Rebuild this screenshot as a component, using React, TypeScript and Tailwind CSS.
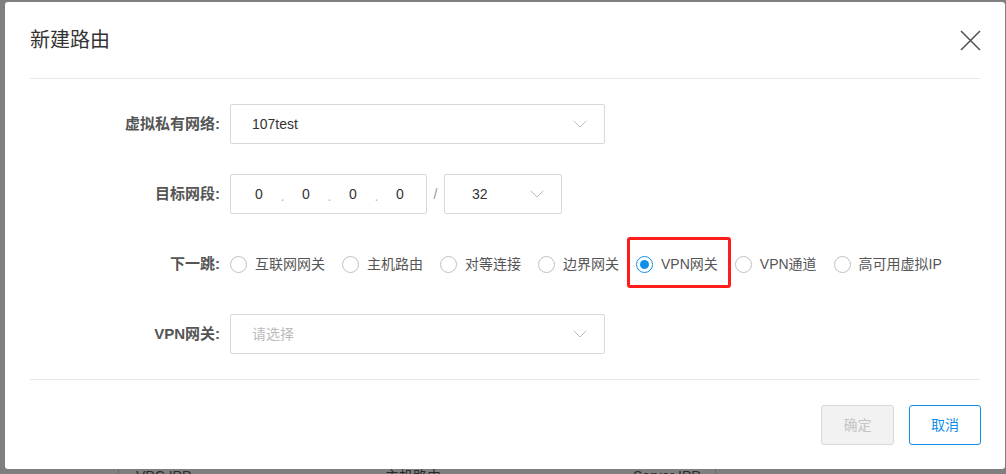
import { ChevronDown } from 'lucide-react';

const font = { fontFamily: '"Liberation Sans", "Noto Sans CJK SC", sans-serif' };

const hops = ['互联网网关', '主机路由', '对等连接', '边界网关', 'VPN网关', 'VPN通道', '高可用虚拟IP'];

function Label({ children }: { children: React.ReactNode }) {
  return (
    <div className="w-[200px] shrink-0 pr-[10px] text-right text-[15px] font-bold text-[#555]">
      {children}
    </div>
  );
}

function Radio({ checked }: { checked?: boolean }) {
  return (
    <span
      className={
        checked
          ? 'w-[17px] h-[17px] rounded-full border border-[#108ee9] flex items-center justify-center shrink-0'
          : 'w-[17px] h-[17px] rounded-full border border-[#bfbfbf] shrink-0'
      }
    >
      {checked && <span className="w-[9px] h-[9px] rounded-full bg-[#108ee9]" />}
    </span>
  );
}

export default function App() {
  return (
    <div className="relative h-[474px] w-full overflow-hidden bg-[#7f7f7f]" style={font}>
      {/* page behind the overlay */}
      <div className="flex pt-[466px] text-[14px] leading-[20px] text-[#2a2a2a]">
        <div className="w-[118px]" />
        <div className="w-[267px] border-l border-[#6a6a6a] pl-[17px]">VPC IPP</div>
        <div className="w-[248px]">主机路由</div>
        <div className="w-[82px]">Server IPP</div>
        <div className="border-l border-[#6a6a6a] pl-[2px]"></div>
      </div>

      {/* modal */}
      <div className="absolute left-[5px] top-[2px] w-[1000px] h-[467px] bg-white rounded-[3px] text-[#555]">
        <div className="h-[76px] flex items-center justify-between pl-[25px] pr-[24px]">
          <span className="text-[20px] text-[#333]">新建路由</span>
          <svg width="21" height="21" viewBox="0 0 21 21" className="text-[#555]">
            <path d="M1 1L20 20M20 1L1 20" stroke="currentColor" strokeWidth="1.6" fill="none" />
          </svg>
        </div>
        <div className="mx-[25px] h-px bg-[#e8e8e8]" />

        <div className="pl-[25px] pt-[25px] flex flex-col gap-[30px]">
          <div className="flex items-center h-[40px]">
            <Label>虚拟私有网络:</Label>
            <div className="w-[375px] h-[40px] border border-[#d9d9d9] rounded-[2px] flex items-center justify-between pl-[21px] pr-[12px] text-[14px] text-[#333]">
              <span>107test</span>
              <ChevronDown size={24} strokeWidth={1} className="text-[#bbb]" />
            </div>
          </div>

          <div className="flex items-center h-[40px]">
            <Label>目标网段:</Label>
            <div className="w-[197px] h-[40px] border border-[#d9d9d9] rounded-[2px] flex items-center pl-[10px] text-[14px] text-[#333]">
              <span className="w-[36px] text-center">0</span>
              <span className="w-[11px] text-center text-[#bbb] pt-[4px]">.</span>
              <span className="w-[36px] text-center">0</span>
              <span className="w-[11px] text-center text-[#bbb] pt-[4px]">.</span>
              <span className="w-[36px] text-center">0</span>
              <span className="w-[11px] text-center text-[#bbb] pt-[4px]">.</span>
              <span className="w-[36px] text-center">0</span>
            </div>
            <span className="w-[17px] text-center text-[14px] text-[#999]">/</span>
            <div className="w-[118px] h-[40px] border border-[#d9d9d9] rounded-[2px] flex items-center justify-between pl-[27px] pr-[12px] text-[14px] text-[#333]">
              <span>32</span>
              <ChevronDown size={24} strokeWidth={1} className="text-[#bbb]" />
            </div>
          </div>

          <div className="flex items-center h-[40px]">
            <Label>下一跳:</Label>
            <div className="flex items-center text-[14px] text-[#555]">
              {hops.map((h) => (
                <div key={h} className="relative flex items-center h-[40px] gap-[8px] mr-[17px]">
                  <Radio checked={h === 'VPN网关'} />
                  <span>{h}</span>
                  {h === 'VPN网关' && (
                    <div className="absolute left-[-9px] top-[-7px] w-[104px] h-[51px] border-[3px] border-[#ff1c1c] rounded-[3px]" />
                  )}
                </div>
              ))}
            </div>
          </div>

          <div className="flex items-center h-[40px]">
            <Label>VPN网关:</Label>
            <div className="w-[375px] h-[40px] border border-[#d9d9d9] rounded-[2px] flex items-center justify-between pl-[21px] pr-[12px] text-[14px] text-[#bbb]">
              <span>请选择</span>
              <ChevronDown size={24} strokeWidth={1} className="text-[#bbb]" />
            </div>
          </div>
        </div>

        <div className="mx-[25px] mt-[25px] h-px bg-[#e8e8e8]" />

        <div className="flex justify-end gap-[15px] pt-[25px] pr-[24px]">
          <button className="w-[73px] h-[40px] rounded-[3px] border border-[#d9d9d9] bg-[#f2f2f2] text-[14px] text-[#c4c4c4]">
            确定
          </button>
          <button className="w-[72px] h-[40px] rounded-[3px] border border-[#108ee9] bg-white text-[14px] text-[#108ee9]">
            取消
          </button>
        </div>
      </div>
    </div>
  );
}
